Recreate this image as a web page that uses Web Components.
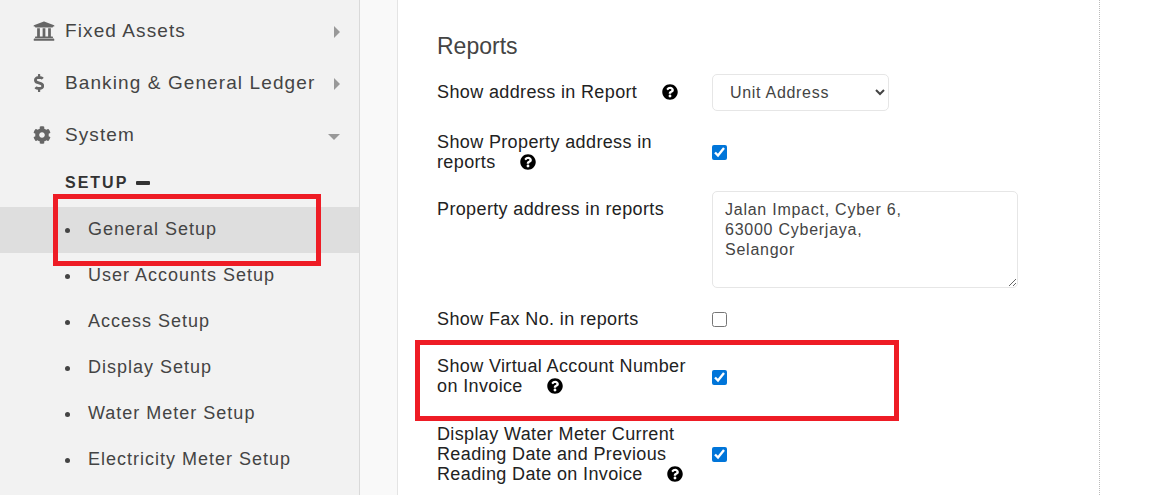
<!DOCTYPE html>
<html><head><meta charset="utf-8"><style>
html,body{margin:0;padding:0;background:#fff}
body{font-family:"Liberation Sans",Arial,sans-serif;width:1171px;height:495px;overflow:hidden}
</style></head><body>
<app-shell>
<side-nav slot="nav">
  <nav-item label="Fixed Assets" icon="bank" caret="right"></nav-item>
  <nav-item label="Banking &amp; General Ledger" icon="dollar" caret="right"></nav-item>
  <nav-item label="System" icon="cog" caret="down"></nav-item>
  <nav-heading>SETUP</nav-heading>
  <sub-item active>General Setup</sub-item>
  <sub-item>User Accounts Setup</sub-item>
  <sub-item>Access Setup</sub-item>
  <sub-item>Display Setup</sub-item>
  <sub-item>Water Meter Setup</sub-item>
  <sub-item>Electricity Meter Setup</sub-item>
</side-nav>
<settings-panel slot="main" heading="Reports">
  <form-row style="margin-top:0"><span slot="label" style="display:block;padding-bottom:2px">Show address in Report <help-icon style="margin-left:19px"></help-icon></span>
    <select slot="control"><option>Unit Address</option></select></form-row>
  <form-row style="margin-top:21px"><span slot="label">Show Property address in<br>reports <help-icon style="margin-left:19px"></help-icon></span>
    <input slot="control" type="checkbox" checked></form-row>
  <form-row align="start" style="margin-top:19px"><span slot="label" style="padding-top:8px;display:block">Property address in reports</span>
    <textarea slot="control">Jalan Impact, Cyber 6,
63000 Cyberjaya,
Selangor</textarea></form-row>
  <form-row style="margin-top:21px"><span slot="label">Show Fax No. in reports</span>
    <input slot="control" type="checkbox"></form-row>
  <form-row style="margin-top:27px"><span slot="label">Show Virtual Account Number<br>on Invoice <help-icon style="margin-left:19px"></help-icon></span>
    <input slot="control" type="checkbox" checked style="margin-top:2px"></form-row>
  <form-row style="margin-top:28px"><span slot="label">Display Water Meter Current<br>Reading Date and Previous<br>Reading Date on Invoice <help-icon style="margin-left:19px"></help-icon></span>
    <input slot="control" type="checkbox" checked></form-row>
</settings-panel>
<red-box slot="overlay" style="left:53px;top:194px;width:268px;height:72px"></red-box>
<red-box slot="overlay" style="left:415px;top:340px;width:484px;height:81px"></red-box>
</app-shell>
<script>
const ICONS={
bank:[512,"M496 128v16a8 8 0 0 1-8 8h-24v12c0 6.627-5.373 12-12 12H60c-6.627 0-12-5.373-12-12v-12H24a8 8 0 0 1-8-8v-16a8 8 0 0 1 4.941-7.392l232-88a7.996 7.996 0 0 1 6.118 0l232 88A8 8 0 0 1 496 128zm-24 304H40c-13.255 0-24 10.745-24 24v16a8 8 0 0 0 8 8h464a8 8 0 0 0 8-8v-16c0-13.255-10.745-24-24-24zM96 192v192H60c-6.627 0-12 5.373-12 12v20h416v-20c0-6.627-5.373-12-12-12h-36V192h-64v192h-64V192h-64v192h-64V192H96z"],
dollar:[288,"M209.2 233.4l-108-31.6C88.7 198.2 80 186.5 80 173.5c0-16.3 13.2-29.5 29.5-29.5h66.3c12.2 0 24.2 3.7 34.2 10.5 6.1 4.1 14.3 3.1 19.5-2l34.8-34c7.1-6.9 6.1-18.4-1.8-24.5C238 74.8 207.4 64.1 176 64V16c0-8.8-7.2-16-16-16h-32c-8.8 0-16 7.2-16 16v48h-2.5C45.8 64-5.4 118.7.5 183.6c4.2 46.1 39.4 83.6 83.8 96.6l102.5 30c12.5 3.7 21.2 15.3 21.2 28.3 0 16.3-13.2 29.5-29.5 29.5h-66.3C100 368 88 364.3 78 357.5c-6.1-4.1-14.3-3.1-19.5 2l-34.8 34c-7.1 6.9-6.1 18.4 1.8 24.5 24.5 19.2 55.1 29.9 86.5 30v48c0 8.8 7.2 16 16 16h32c8.8 0 16-7.2 16-16v-48.2c46.6-.9 90.3-28.6 105.7-72.7 21.5-61.6-14.6-124.8-72.5-141.7z"],
cog:[512,"M487.4 315.7l-42.6-24.6c4.3-23.2 4.3-47 0-70.2l42.6-24.6c4.9-2.8 7.1-8.6 5.5-14-11.1-35.6-30-67.8-54.7-94.6-3.8-4.1-10-5.1-14.8-2.3L380.8 110c-17.9-15.4-38.5-27.3-60.8-35.1V25.8c0-5.6-3.9-10.5-9.4-11.7-36.7-8.2-74.3-7.8-109.2 0-5.5 1.2-9.4 6.1-9.4 11.7V75c-22.2 7.9-42.8 19.8-60.8 35.1L88.7 85.5c-4.9-2.8-11-1.9-14.8 2.3-24.7 26.7-43.6 58.9-54.7 94.6-1.7 5.4.6 11.2 5.5 14L67.3 221c-4.3 23.2-4.3 47 0 70.2l-42.6 24.6c-4.9 2.8-7.1 8.6-5.5 14 11.1 35.6 30 67.8 54.7 94.6 3.8 4.1 10 5.1 14.8 2.3l42.6-24.6c17.9 15.4 38.5 27.3 60.8 35.1v49.2c0 5.6 3.9 10.5 9.4 11.7 36.7 8.2 74.3 7.8 109.2 0 5.5-1.2 9.4-6.1 9.4-11.7v-49.2c22.2-7.9 42.8-19.8 60.8-35.1l42.6 24.6c4.9 2.8 11 1.9 14.8-2.3 24.7-26.7 43.6-58.9 54.7-94.6 1.5-5.5-.7-11.3-5.6-14.1zM256 336c-44.1 0-80-35.9-80-80s35.9-80 80-80 80 35.9 80 80-35.9 80-80 80z"]};
const HELP="M504 256c0 136.997-111.043 248-248 248S8 392.997 8 256C8 119.083 119.043 8 256 8s248 111.083 248 248zM262.655 90c-54.497 0-89.255 22.957-116.549 63.758-3.536 5.286-2.353 12.415 2.715 16.258l34.699 26.31c5.205 3.947 12.621 3.008 16.665-2.122 17.864-22.658 30.113-35.797 57.303-35.797 20.429 0 45.698 13.148 45.698 32.958 0 14.976-12.363 22.667-32.534 33.976C247.128 238.528 216 254.941 216 296v4c0 6.627 5.373 12 12 12h56c6.627 0 12-5.373 12-12v-1.333c0-28.462 83.186-29.647 83.186-106.667 0-58.002-60.165-102-116.531-102zM256 338c-25.365 0-46 20.635-46 46 0 25.364 20.635 46 46 46s46-20.636 46-46c0-25.365-20.635-46-46-46z";
class AppShell extends HTMLElement{constructor(){super();this.attachShadow({mode:'open'}).innerHTML=`<style>
:host{display:flex;position:relative;width:1171px;height:495px;overflow:hidden;background:#fff}
.nav{flex:0 0 359px;background:#f2f2f2;border-right:1px solid #d9d9d9}
.gutter{flex:0 0 37px;background:#f9f9f9;border-right:1px solid #e4e4e4}
.main{flex:0 0 701px;border-right:1px dotted #bbb}
</style><div class="nav"><slot name="nav"></slot></div><div class="gutter"></div><div class="main"><slot name="main"></slot></div><slot name="overlay"></slot>`}}
customElements.define('app-shell',AppShell);
customElements.define('side-nav',class extends HTMLElement{constructor(){super();this.attachShadow({mode:'open'}).innerHTML=`<style>:host{display:block;padding-top:5px}</style><slot></slot>`}});
customElements.define('nav-item',class extends HTMLElement{
  connectedCallback(){
    if(this.shadowRoot)return;
    const name=this.getAttribute('icon');
    const [w,d]=ICONS[name];
    const down=this.getAttribute('caret')==='down';
    const size={bank:[22,22,-.5],dollar:[10.2,18,.5],cog:[18,18,0]}[name];
    this.attachShadow({mode:'open'}).innerHTML=`<style>
:host{display:flex;align-items:center;height:52px;color:#444;font-size:19px;letter-spacing:1.1px;position:relative}
.ic{flex:0 0 32px;margin-left:33px;display:flex;align-items:center}
svg.i{fill:#666;display:block;margin-left:${size[2]}px}
.label{flex:1;white-space:nowrap}
.caret{width:0;height:0;margin-right:${down?19:19.5}px;margin-top:${down?3:2}px;${down?'border:6px solid transparent;border-top:6px solid #999;border-bottom:0':'border:6px solid transparent;border-left:6.5px solid #999;border-right:0'}}
</style><span class="ic"><svg class="i" width="${size[0]}" height="${size[1]}" viewBox="0 0 ${w} 512"><path d="${d}"/></svg></span><span class="label">${this.getAttribute('label').replace('&','&amp;')}</span><span class="caret"></span>`;
  }
});
customElements.define('nav-heading',class extends HTMLElement{constructor(){super();this.attachShadow({mode:'open'}).innerHTML=`<style>
:host{display:flex;align-items:center;height:46px;padding:0 0 2px 65px;font-size:16px;font-weight:700;letter-spacing:2px;color:#333;box-sizing:border-box}
i{display:block;width:14px;height:4px;background:#333;border-radius:1px;margin-left:8px;margin-bottom:1px}
</style><slot></slot><i></i>`}});
customElements.define('sub-item',class extends HTMLElement{constructor(){super();this.attachShadow({mode:'open'}).innerHTML=`<style>
:host{display:flex;align-items:center;height:46px;box-sizing:border-box;padding:0 0 2px 65px;font-size:18px;letter-spacing:1px;color:#444}
:host([active]){background:#dedede}
b{width:5px;height:5px;border-radius:50%;background:#444;margin-right:18px;margin-top:2px}
</style><b></b><slot></slot>`}});
customElements.define('settings-panel',class extends HTMLElement{constructor(){super();this.attachShadow({mode:'open'}).innerHTML=`<style>
:host{display:block;padding:34px 0 0 39px}
h2{margin:0 0 15px;font-weight:400;font-size:23px;line-height:25px;color:#444}
</style><h2>${this.getAttribute('heading')||''}</h2><slot></slot>`}});
customElements.define('form-row',class extends HTMLElement{constructor(){super();this.attachShadow({mode:'open'}).innerHTML=`<style>
:host{display:grid;grid-template-columns:275px 1fr;align-items:center;font-size:18px;line-height:20px;color:#222;letter-spacing:.37px}
:host([align=start]){align-items:start}
::slotted(select){width:177px;height:37px;box-sizing:border-box;font:16px "Liberation Sans",Arial,sans-serif;letter-spacing:.7px;padding:0 13px;border:1px solid #e6e6e6;border-radius:5px;background:#fff;color:#444}
::slotted(input){width:15px;height:15px;margin:0;accent-color:#0075d9}
::slotted(textarea){display:block;width:306px;height:97px;box-sizing:border-box;font:16px/20px "Liberation Sans",Arial,sans-serif;letter-spacing:.75px;padding:8px 12px;border:1px solid #e6e6e6;border-radius:5px;color:#444;background:#fff;outline:0}
</style><div><slot name="label"></slot></div><div style="display:flex;align-items:center"><slot name="control"></slot></div>`}});
customElements.define('help-icon',class extends HTMLElement{constructor(){super();this.attachShadow({mode:'open'}).innerHTML=`<style>
:host{display:inline-block;width:16px;height:16px;vertical-align:-2px}
svg{display:block}
</style><svg width="16" height="16" viewBox="0 0 512 512"><path d="${HELP}"/></svg>`}});
customElements.define('red-box',class extends HTMLElement{constructor(){super();this.attachShadow({mode:'open'}).innerHTML=`<style>
:host{display:block;position:absolute;box-sizing:border-box;border:5px solid #ee1c25;pointer-events:none}
</style>`}});
</script>
</body></html>
